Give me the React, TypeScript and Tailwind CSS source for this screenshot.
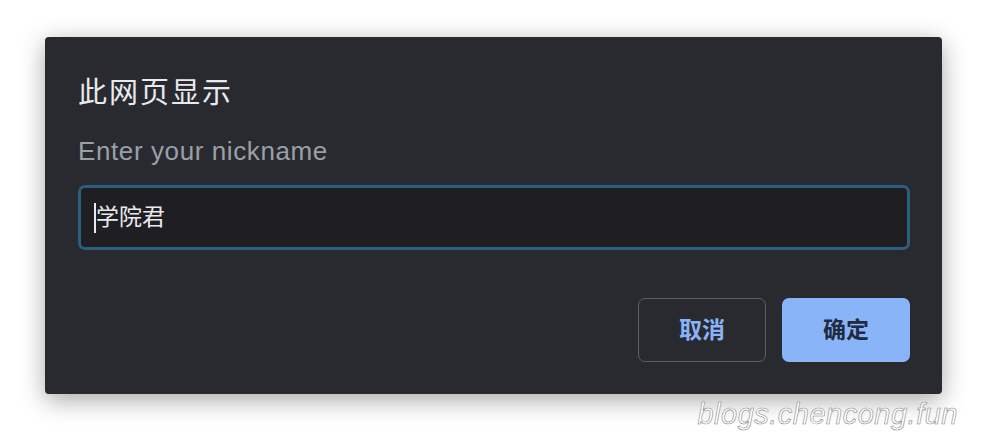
import React from "react";

const App: React.FC = () => {
  return (
    <div
      className="w-[988px] h-[448px] bg-white pt-[37px] pl-[45px] overflow-hidden"
      style={{ fontFamily: '"Liberation Sans", "Noto Sans CJK SC", sans-serif' }}
    >
      <div className="w-[897px] h-[357px] bg-[#292a2f] rounded-[4px] shadow-[0_6px_24px_rgba(0,0,0,0.35)] pt-[26px] pl-[33px] pr-[32px] flex flex-col">
        <h1 className="text-[29px] leading-[60px] text-[#e8eaed] font-normal tracking-[2px]">此网页显示</h1>
        <p className="mt-[8px] text-[26px] leading-[40px] text-[#9aa0a6] tracking-[0.6px]">Enter your nickname</p>
        <div className="mt-[14px] h-[65px] rounded-[7px] border-[3px] border-[#2a5f80] bg-[#1f1f23] flex items-center pl-[13px]">
          <span className="w-[2px] h-[30px] bg-[#e8eaed]" />
          <span className="text-[23px] text-[#e8eaed]">学院君</span>
        </div>
        <div className="mt-[48px] flex justify-end gap-[16px]">
          <button className="w-[128px] h-[64px] rounded-[7px] border border-[#5f6066] text-[#8ab4f8] text-[23px] font-bold">
            取消
          </button>
          <button className="w-[128px] h-[64px] rounded-[7px] bg-[#8ab4f8] text-[#202b41] text-[23px] font-bold">
            确定
          </button>
        </div>
      </div>
      <div className="w-[913px] flex justify-end mt-[2px]">
        <span
          className="text-[29px] leading-[36px] italic font-light text-white tracking-[0.5px]"
          style={{
            fontFamily: '"Liberation Sans", sans-serif',
            WebkitTextStroke: "0.6px #8a8a8a",
          }}
        >
          blogs.chencong.fun
        </span>
      </div>
    </div>
  );
};

export default App;
